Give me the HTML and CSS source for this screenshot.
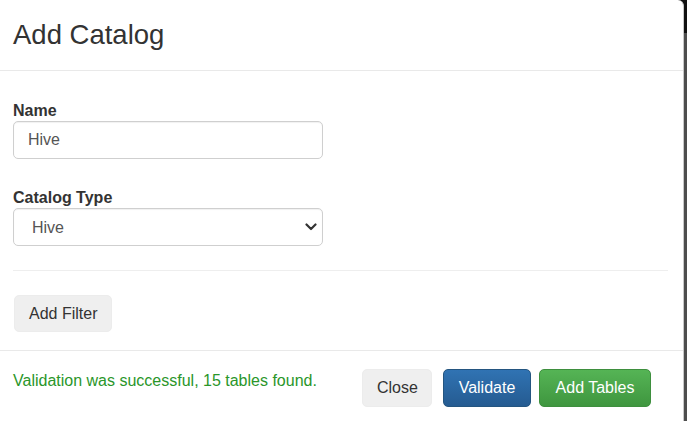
FILE: index.html
```html
<!DOCTYPE html>
<html>
<head>
<meta charset="utf-8">
<link rel="stylesheet" href="styles.css">
</head>
<body>
<div class="modal">
  <div class="modal-header">
    <h3 class="modal-title">Add Catalog</h3>
  </div>
  <div class="modal-body">
    <div class="form-group">
      <label class="label" for="name">Name</label>
      <input class="control" id="name" type="text" value="Hive">
    </div>
    <div class="form-group">
      <label class="label" for="type">Catalog Type</label>
      <div class="select-wrap">
        <select class="control select" id="type">
          <option>Hive</option>
        </select>
        <svg class="chevron" width="12" height="8" viewBox="0 0 12 8"><path d="M1.5 1.5 L6 6 L10.5 1.5" fill="none" stroke="#333" stroke-width="2.2" stroke-linecap="round" stroke-linejoin="round"/></svg>
      </div>
    </div>
    <hr class="divider">
    <button class="btn btn-default btn-filter">Add Filter</button>
  </div>
  <div class="modal-footer">
    <div class="status">Validation was successful, 15 tables found.</div>
    <div class="actions">
      <button class="btn btn-close">Close</button>
      <button class="btn btn-primary">Validate</button>
      <button class="btn btn-success">Add Tables</button>
    </div>
  </div>
</div>
</body>
</html>
```

FILE: styles.css
```css
html, body {
  margin: 0;
  padding: 0;
  height: 100%;
}
body {
  background: linear-gradient(to bottom, #111 0, #111 33px, #4d4d4d 33px, #4d4d4d 100%);
  font-family: "Liberation Sans", Arial, sans-serif;
  font-size: 16px;
  color: #333;
  overflow: hidden;
}
.modal {
  width: 683px;
  height: 100%;
  background: #fff;
  border-right: 1px solid #c8c8c8;
  border-top-right-radius: 6px;
  box-sizing: content-box;
}
.modal-header {
  padding: 19px 15px 20px 13px;
  border-bottom: 1px solid #e9e9e9;
}
.modal-title {
  margin: 0;
  font-size: 27.5px;
  line-height: 31px;
  font-weight: normal;
  color: #333;
}
.modal-body {
  padding: 29px 15px 18px 13px;
}
.form-group {
  margin-bottom: 28px;
}
.form-group:last-of-type {
  margin-bottom: 0;
}
.label {
  display: block;
  font-weight: bold;
  line-height: 21px;
  margin: 0;
  color: #333;
}
.control {
  display: block;
  box-sizing: border-box;
  width: 310px;
  height: 38px;
  padding: 0 14px;
  font-family: inherit;
  font-size: 16px;
  color: #555;
  background: #fff;
  border: 1px solid #cfcfcf;
  border-radius: 5px;
  box-shadow: inset 0 1px 1px rgba(0,0,0,0.06);
  outline: none;
}
.select-wrap {
  position: relative;
  width: 310px;
}
.select {
  -webkit-appearance: none;
  appearance: none;
  padding-left: 18px;
}
.chevron {
  position: absolute;
  right: 6px;
  top: 15px;
}
.divider {
  margin: 24px 0 24px 0;
  border: 0;
  border-top: 1px solid #eeeeee;
  height: 0;
}
.btn {
  box-sizing: border-box;
  height: 38px;
  padding: 0 15px;
  font-family: inherit;
  font-size: 16px;
  line-height: 36px;
  border: 1px solid transparent;
  border-radius: 5px;
  cursor: pointer;
}
.btn-default {
  background: #efefef;
  border-color: #ececec;
  color: #333;
}
.btn-filter {
  height: 37px;
  line-height: 35px;
  padding: 0 14px;
  margin-left: 1px;
}
.modal-footer {
  display: flex;
  justify-content: space-between;
  align-items: flex-start;
  padding: 18px 32px 0 13px;
  border-top: 1px solid #e9e9e9;
}
.status {
  color: #2a962a;
  line-height: 23px;
}
.actions {
  display: flex;
}
.btn-close {
  background: #efefef;
  border-color: #ececec;
  color: #333;
  padding: 0 14px;
  width: 70px;
}
.btn-primary {
  color: #fff;
  background: linear-gradient(to bottom, #3073b3 0, #255b91 100%);
  border-color: #245580;
  width: 88px;
  padding: 0;
  margin-left: 11px;
}
.btn-success {
  color: #fff;
  background: linear-gradient(to bottom, #55b455 0, #3f963f 100%);
  border-color: #3e8f3e;
  width: 112px;
  padding: 0;
  margin-left: 8px;
}
```
